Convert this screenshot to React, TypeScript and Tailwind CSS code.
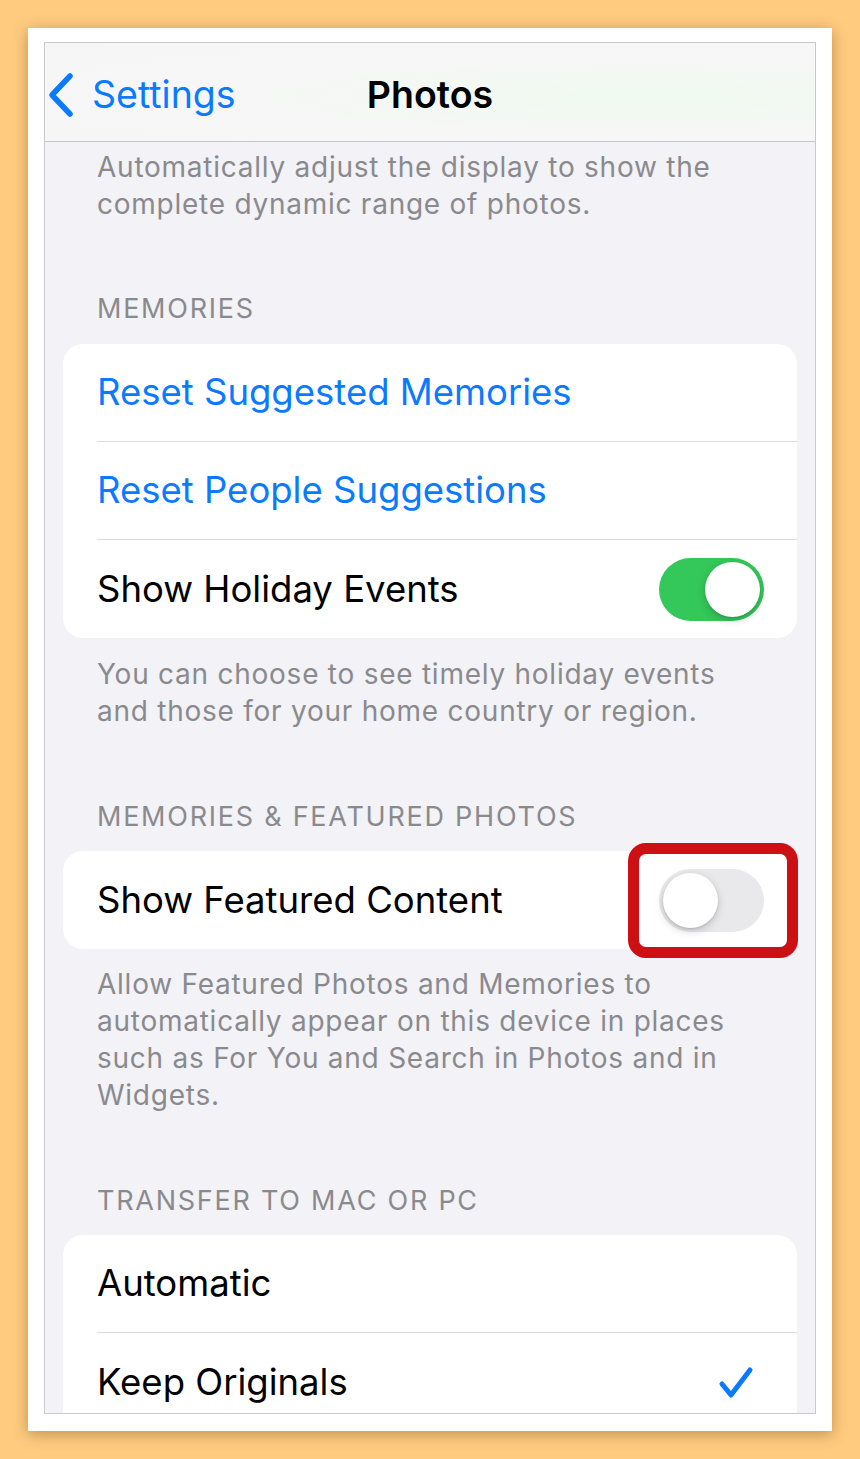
import React from 'react';

const font = { fontFamily: 'Inter, "Noto Sans", sans-serif' };

function Toggle({ on }: { on: boolean }) {
    return (
        <div
            className={`relative w-[105px] h-[63px] rounded-full shrink-0 ${on ? 'bg-[#34c759]' : 'bg-[#e9e9eb]'}`}
        >
            <div
                className={`absolute top-[4px] w-[55px] h-[55px] rounded-full bg-white shadow-[0_3px_8px_rgba(0,0,0,0.18),0_1px_2px_rgba(0,0,0,0.12)] ${on ? 'right-[4px]' : 'left-[4px]'}`}
            />
        </div>
    );
}

function Footer({ children }: { children: React.ReactNode }) {
    return (
        <p className="pl-[52px] pr-[73px] text-[28px] leading-[37px] tracking-[0.75px] text-[#8a8a8e]">{children}</p>
    );
}

function Header({ children }: { children: React.ReactNode }) {
    return (
        <h3 className="pl-[52px] text-[27px] leading-[32px] tracking-[1.75px] text-[#8a8a8e] uppercase">{children}</h3>
    );
}

function Row({ children, last, right }: { children: React.ReactNode; last?: boolean; right?: React.ReactNode }) {
    return (
        <div className="h-[98px] pl-[34px] flex">
            <div className={`flex-1 flex items-center justify-between pr-[33px] ${last ? '' : 'border-b border-[#dcdcdf]'}`}>
                {children}
                {right}
            </div>
        </div>
    );
}

export default function App() {
    return (
        <div className="w-[860px] h-[1459px] bg-[#fecb7f] pt-[28px] pl-[28px]" style={font}>
            <div className="w-[804px] h-[1403px] bg-white pt-[14px] pl-[16px] shadow-[0_3px_14px_rgba(90,60,10,0.4)]">
                <div className="w-[772px] h-[1372px] border border-[#c9c9cc] bg-[#f2f2f7] flex flex-col overflow-hidden">
                    {/* Nav bar */}
                    <div className="relative h-[99px] shrink-0 border-b border-[#c6c6c8] bg-[radial-gradient(ellipse_at_78%_55%,#effaef_0%,#f6f7f6_45%,#f6f6f6_100%)] flex items-center">
                        <div className="flex items-center pl-[1px] pt-[6px] text-[#0a7aff]">
                            <svg width="30" height="46" viewBox="0 0 30 46" className="mr-[16px]">
                                <path d="M24 4 L6 23 L24 42" fill="none" stroke="#0a7aff" strokeWidth="5.5" strokeLinecap="round" strokeLinejoin="round" />
                            </svg>
                            <span className="text-[37.5px] leading-none">Settings</span>
                        </div>
                        <div className="absolute inset-0 flex items-center justify-center pt-[6px]">
                            <span className="text-[37.5px] font-semibold text-black leading-none">Photos</span>
                        </div>
                    </div>

                    <div className="flex flex-col">
                        <div className="mt-[7px]">
                            <Footer>Automatically adjust the display to show the complete dynamic range of photos.</Footer>
                        </div>

                        <div className="mt-[70px]">
                            <Header>Memories</Header>
                        </div>
                        <div className="mt-[19px] mx-[18px] bg-white rounded-[20px] text-[36.5px]">
                            <Row><span className="text-[#0a7aff]">Reset Suggested Memories</span></Row>
                            <Row><span className="text-[#0a7aff]">Reset People Suggestions</span></Row>
                            <Row last right={<Toggle on />}><span className="text-black">Show Holiday Events</span></Row>
                        </div>
                        <div className="mt-[18px]">
                            <Footer>You can choose to see timely holiday events and those for your home country or region.</Footer>
                        </div>

                        <div className="mt-[71px]">
                            <Header>Memories &amp; Featured Photos</Header>
                        </div>
                        <div className="relative mt-[18px] mx-[18px] bg-white rounded-[20px] text-[36.5px]">
                            <Row last right={<Toggle on={false} />}><span className="text-black">Show Featured Content</span></Row>
                            {/* highlight box */}
                            <div className="absolute left-[565px] top-[-8px] w-[170px] h-[115px] rounded-[18px] border-[11px] border-[#cc1014]" />
                        </div>
                        <div className="mt-[17px]">
                            <Footer>Allow Featured Photos and Memories to automatically appear on this device in places such as For You and Search in Photos and in Widgets.</Footer>
                        </div>

                        <div className="mt-[71px]">
                            <Header>Transfer to Mac or PC</Header>
                        </div>
                        <div className="mt-[18px] mx-[18px] bg-white rounded-[20px] text-[36.5px]">
                            <Row><span className="text-black">Automatic</span></Row>
                            <Row
                                last
                                right={
                                    <svg width="36" height="36" viewBox="0 0 36 36" className="mr-[10px]">
                                        <path d="M4 20 L13 31 L32 6" fill="none" stroke="#0a7aff" strokeWidth="5" strokeLinecap="round" strokeLinejoin="round" />
                                    </svg>
                                }
                            >
                                <span className="text-black">Keep Originals</span>
                            </Row>
                        </div>
                    </div>
                </div>
            </div>
        </div>
    );
}
